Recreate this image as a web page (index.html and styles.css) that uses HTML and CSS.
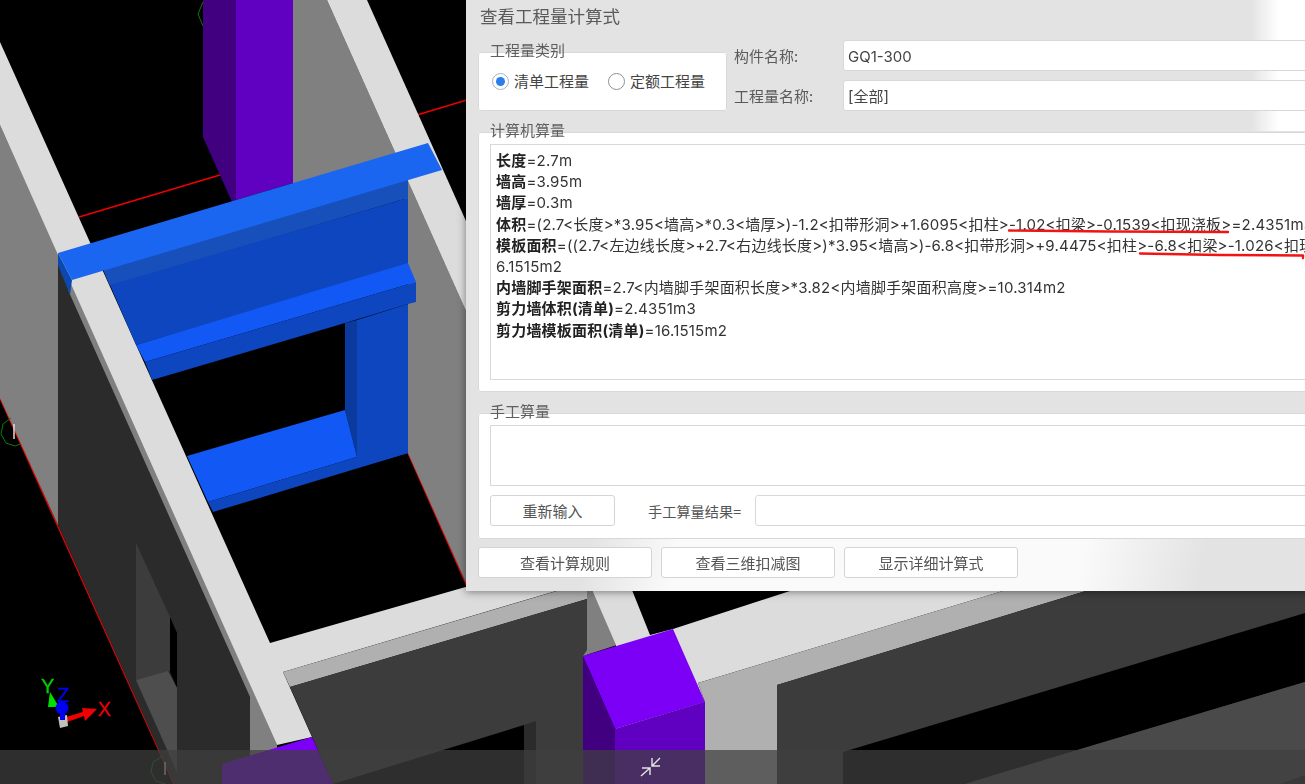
FILE: index.html
```
<!DOCTYPE html>
<html lang="zh-CN">
<head>
<meta charset="utf-8">
<title>查看工程量计算式</title>
<link rel="stylesheet" href="styles.css">
</head>
<body>
<div class="stage">
  <svg class="scene" viewBox="0 0 1305 784" width="1305" height="784" xmlns="http://www.w3.org/2000/svg">
    <rect width="1305" height="784" fill="#000"/>
    <g class="redline">
      <line x1="79" y1="217" x2="220" y2="175"/>
      <line x1="417" y1="115" x2="470" y2="99"/>
      <line x1="0" y1="398" x2="174" y2="784"/>
      <line x1="408" y1="453" x2="470" y2="593"/>
    </g>
    <!-- left walls -->
    <polygon fill="#808080" points="0,125 58,253 58,525 0,398"/>
    <polygon fill="#2b2b2b" points="58,253 70,290 250,697 250,784 174,784 58,525"/>
    <polygon fill="#3c3c3c" points="136,543 170,617 170,671 136,680"/>
    <polygon fill="#000" points="170,617 177,633 177,688 170,672"/>
    <polygon fill="#4e4e4e" points="136,680 168,671 177,688 177,772"/>
    <polygon fill="#808080" points="68,290 72,280 277,745 277,784 250,784 250,697"/>
    <!-- upper purple column and right wall -->
    <polygon fill="#808080" points="293,0 327,0 480,342 480,614 408,453 408,200 293,183"/>
    <polygon fill="#400080" points="203,0 236,0 236,200 232,202 203,137"/>
    <polygon fill="#6000c0" points="236,0 293,0 293,183 236,200"/>
    <!-- light wall tops -->
    <polygon fill="#dcdcdc" points="327,0 367,0 500,297 500,387"/>
    <polygon fill="#dcdcdc" points="0,42 270,643 490,580 600,578 283,672 312,737 277,745 0,125"/>
    <polygon fill="#b0b0b0" points="283,672 560,590 587,590 587,599 290,687"/>
    <polygon fill="#3c3c3c" points="290,687 587,599 587,784 333,784"/>
    <polygon fill="#000" points="333,784 524,725 524,784"/>
    <polygon fill="#2b2b2b" points="524,725 536,721 536,784 524,784"/>
    <!-- right lower structure -->
    <polygon fill="#808080" points="587,590 592,590 617,645 583,656 587,650"/>
    <polygon fill="#dcdcdc" points="592,590 632,590 650,635 673,629 793,590 1006,590 698,683 705,702 616,729 616,645"/>
    <polygon fill="#b0b0b0" points="698,683 1006,590 1089,590 777,685 777,784 705,784 705,702"/>
    <polygon fill="#3c3c3c" points="777,685 1089,590 1305,590 1305,784 777,784"/>
    <polygon fill="#000" points="843,752 1305,613 1305,682 965,784 843,784"/>
    <polygon fill="#4a4a4a" points="1077,750 1305,682 1305,775 1280,784 965,784"/>
    <polygon fill="#2b2b2b" points="1280,784 1305,775 1305,784"/>
    <!-- purple columns -->
    <polygon fill="#7b00f5" points="222,764 312,737 333,784 222,784"/>
    <polygon fill="#7b00f5" points="583,656 673,629 705,702 615,729"/>
    <polygon fill="#6000c0" points="615,729 705,702 705,784 615,784"/>
    <polygon fill="#400080" points="583,656 615,729 615,784 583,784"/>
    <!-- blue wall opening -->
    <polygon fill="#174fbb" points="104,268 408,178 408,198 110,286 104,272"/>
    <polygon fill="#0e46c0" points="110,285 408,198 408,265 136,345"/>
    <polygon fill="#1258f5" points="136,345 408,263 416,282 145,362"/>
    <polygon fill="#0e46c0" points="145,362 416,282 416,302 408,304 345,323 152,380"/>
    <polygon fill="#0e46c0" points="357,320 408,304 408,453 357,468"/>
    <polygon fill="#0a3a9e" points="345,323 357,320 357,457 345,410"/>
    <polygon fill="#1258f5" points="187,456 345,410 357,457 208,502"/>
    <polygon fill="#0e46c0" points="208,502 357,457 408,442 408,453 213,512"/>
    <polygon fill="#0d47b0" points="58,253 72,280 70,295 58,265"/>
    <polygon fill="#1a66f0" points="58,253 428,143 442,170 72,280"/>
    <!-- grid marks -->
    <g class="gridmark">
      <polyline points="203,2 198,14 203,26"/>
      <polyline points="11,418 3,424 1,434 6,443 15,446 20,444"/>
      <polyline points="163,756 153,762 151,772 156,781 165,784"/>
    </g>
    <line class="gridtick" x1="14" y1="424" x2="14" y2="439"/>
    <line class="gridtick" x1="165" y1="762" x2="165" y2="775"/>
    <!-- axes -->
    <polygon fill="#f00000" points="66,717 83,712 82,708 97,709 85,721 84,716 67,722"/>
    <polygon fill="#00e000" points="50,692 59,707 48,707"/>
    <polygon fill="#c0c0c0" points="58,717 67,715 68,726 60,728"/>
    <rect x="60" y="710" width="5" height="10" fill="#0000f0"/>
    <circle cx="62" cy="708" r="6.5" fill="#0000f0"/>
    <text class="axis axis-y" x="41" y="693">Y</text>
    <text class="axis axis-z" x="57" y="702">Z</text>
    <text class="axis axis-x" x="98" y="716">X</text>
  </svg>

  <section class="dialog">
    <h1 class="title">查看工程量计算式</h1>
    <div class="top">
      <fieldset class="group kind">
        <legend class="legend">工程量类别</legend>
        <label class="radio"><span class="dot checked"></span>清单工程量</label>
        <label class="radio"><span class="dot"></span>定额工程量</label>
      </fieldset>
      <div class="fields">
        <div class="field"><span class="field-label">构件名称:</span><div class="input">GQ1-300</div></div>
        <div class="field"><span class="field-label">工程量名称:</span><div class="input">[全部]</div></div>
      </div>
    </div>
    <fieldset class="group computed">
      <legend class="legend">计算机算量</legend>
      <div class="textbox formula">
        <div><b>长度</b>=2.7m</div>
        <div><b>墙高</b>=3.95m</div>
        <div><b>墙厚</b>=0.3m</div>
        <div><b>体积</b>=(2.7&lt;长度&gt;*3.95&lt;墙高&gt;*0.3&lt;墙厚&gt;)-1.2&lt;扣带形洞&gt;+1.6095&lt;扣柱&gt;-1.02&lt;扣梁&gt;-0.1539&lt;扣现浇板&gt;=2.4351m3</div>
        <div><b>模板面积</b>=((2.7&lt;左边线长度&gt;+2.7&lt;右边线长度&gt;)*3.95&lt;墙高&gt;)-6.8&lt;扣带形洞&gt;+9.4475&lt;扣柱&gt;-6.8&lt;扣梁&gt;-1.026&lt;扣现浇板&gt;=1</div>
        <div>6.1515m2</div>
        <div><b>内墙脚手架面积</b>=2.7&lt;内墙脚手架面积长度&gt;*3.82&lt;内墙脚手架面积高度&gt;=10.314m2</div>
        <div><b>剪力墙体积(清单)</b>=2.4351m3</div>
        <div><b>剪力墙模板面积(清单)</b>=16.1515m2</div>
      </div>
    </fieldset>
    <fieldset class="group manual">
      <legend class="legend">手工算量</legend>
      <div class="textbox manual-box"></div>
      <div class="manual-row">
        <button class="btn reset" type="button">重新输入</button>
        <span class="result-label">手工算量结果=</span>
        <div class="input result"></div>
      </div>
    </fieldset>
    <div class="actions">
      <button class="btn action" type="button">查看计算规则</button>
      <button class="btn action" type="button">查看三维扣减图</button>
      <button class="btn action" type="button">显示详细计算式</button>
    </div>
  </section>

  <svg class="marks" viewBox="0 0 1305 784" width="1305" height="784" xmlns="http://www.w3.org/2000/svg">
    <path d="M1009 230.5 L1110 231.5 L1228 232"/>
    <path d="M1140 253.5 L1220 255 L1303 255.5 L1303 258"/>
  </svg>

  <footer class="bar">
    <svg class="shrink" viewBox="0 0 22 22" width="22" height="22" xmlns="http://www.w3.org/2000/svg">
      <path d="M1 20 L10 12 M2 12 H10 V19 M12 10 L20 2 M12 2 V10 H20"/>
    </svg>
  </footer>
</div>
</body>
</html>
```
FILE: styles.css
```
* { box-sizing: border-box; }
html, body { margin: 0; padding: 0; background: #000; }
.stage {
  position: relative;
  width: 1305px;
  height: 784px;
  overflow: hidden;
  font-family: "Noto Sans CJK SC", "Noto Sans", sans-serif;
}
.scene { position: absolute; left: 0; top: 0; display: block; filter: blur(.45px); }
.redline line { stroke: #f00000; stroke-width: 1.4; }
.gridmark polyline { fill: none; stroke: #0a7a0a; stroke-width: 1; }
.gridtick { stroke: #ddd; stroke-width: 1.5; }
.axis { font-family: "Liberation Sans", sans-serif; font-size: 20px; stroke-width: .3px; }
.axis-x { fill: #f00000; stroke: #f00000; }
.axis-y { fill: #00d000; stroke: #00d000; }
.axis-z { fill: #0000f0; stroke: #0000f0; }

.dialog {
  position: absolute;
  left: 466px;
  top: 0;
  width: 900px;
  height: 591px;
  padding: 0 12px;
  color: #555;
  background:
    linear-gradient(100deg, rgba(255,255,255,0) 120px, #fafafa 210px, #fafafa 610px, rgba(255,255,255,0) 730px) 0 100% / 100% 52px no-repeat,
    linear-gradient(90deg, rgba(255,255,255,0) 785px, #fff 812px) 0 0 / 100% 131px no-repeat,
    #e3e3e3;
  box-shadow: 0 1px 8px rgba(0,0,0,.45);
  filter: blur(.35px);
}
.title {
  margin: 0;
  padding: 4px 0 0 2px;
  height: 40px;
  font-size: 17.5px;
  line-height: 24px;
  font-weight: 400;
  color: #5a5a5a;
}
.top { display: flex; height: 71px; }
.group {
  position: relative;
  margin: 0;
  padding: 0;
  min-width: 0;
  background: #fff;
  border: 1px solid #d8d8d8;
  border-radius: 3px;
}
.legend {
  position: absolute;
  left: 11px;
  top: -12px;
  padding: 0;
  font-size: 15px;
  line-height: 18px;
  color: #5f5f5f;
}
.kind {
  display: flex;
  align-items: flex-start;
  gap: 19px;
  width: 249px;
  height: 59px;
  margin-top: 12px;
  padding: 18px 0 0 13px;
}
.radio { display: flex; align-items: center; gap: 5px; height: 20px; font-size: 15px; line-height: 18px; color: #444; }
.dot {
  position: relative;
  width: 17px;
  height: 17px;
  border: 1px solid #8f8f8f;
  border-radius: 50%;
  background: #fff;
}
.dot.checked { border-color: #9fb2cc; }
.dot.checked::after {
  content: "";
  position: absolute;
  left: 3px;
  top: 3px;
  width: 9px;
  height: 9px;
  border-radius: 50%;
  background: #2b7de9;
}
.fields { display: flex; flex-direction: column; gap: 9px; margin-left: 7px; flex: 1; }
.field { display: flex; align-items: center; height: 31px; }
.field-label { width: 109px; font-size: 15px; color: #5a5a5a; }
.input {
  flex: 1;
  height: 100%;
  padding: 0 4px;
  background: #fff;
  border: 1px solid #d8d8d8;
  border-radius: 3px;
  font-family: "Inter", "Noto Sans CJK SC", sans-serif;
  font-size: 15px;
  line-height: 31px;
  color: #444;
}
.computed { height: 260px; margin-top: 21px; padding: 11px 11px; }
.textbox { width: 100%; background: #fff; border: 1px solid #d8d8d8; }
.formula {
  height: 236px;
  padding: 5px 5px 0;
  overflow: hidden;
  white-space: nowrap;
  font-family: "Inter", "Noto Sans CJK SC", sans-serif;
  font-size: 15px;
  line-height: 21.2px;
  letter-spacing: .2px;
  color: #333;
}
.formula b { color: #222; font-weight: 700; }
.manual { height: 126px; margin-top: 21px; padding: 11px 11px; }
.manual-box { height: 61px; }
.manual-row { display: flex; align-items: center; height: 31px; margin-top: 9px; }
.btn {
  background: #fff;
  border: 1px solid #d4d4d4;
  border-radius: 3px;
  font-family: inherit;
  font-size: 15px;
  line-height: 18px;
  color: #555;
  padding: 1px 0 0;
}
.reset { width: 125px; height: 31px; }
.result-label { flex: none; width: 107px; margin-left: 33px; font-size: 14.2px; white-space: nowrap; color: #555; }
.actions { display: flex; gap: 9px; margin-top: 8px; }
.action { width: 174px; height: 31px; }

.marks { position: absolute; left: 0; top: 0; pointer-events: none; }
.marks path { fill: none; stroke: #f01414; stroke-width: 2.4; stroke-linecap: round; stroke-linejoin: round; }

.bar {
  position: absolute;
  left: 0;
  right: 0;
  bottom: 0;
  height: 34px;
  display: flex;
  align-items: center;
  justify-content: center;
  background: rgba(63,63,63,.73);
}
.shrink { display: block; margin-left: -4px; }
.shrink path { fill: none; stroke: #e4e4e4; stroke-width: 1.4; }
```
